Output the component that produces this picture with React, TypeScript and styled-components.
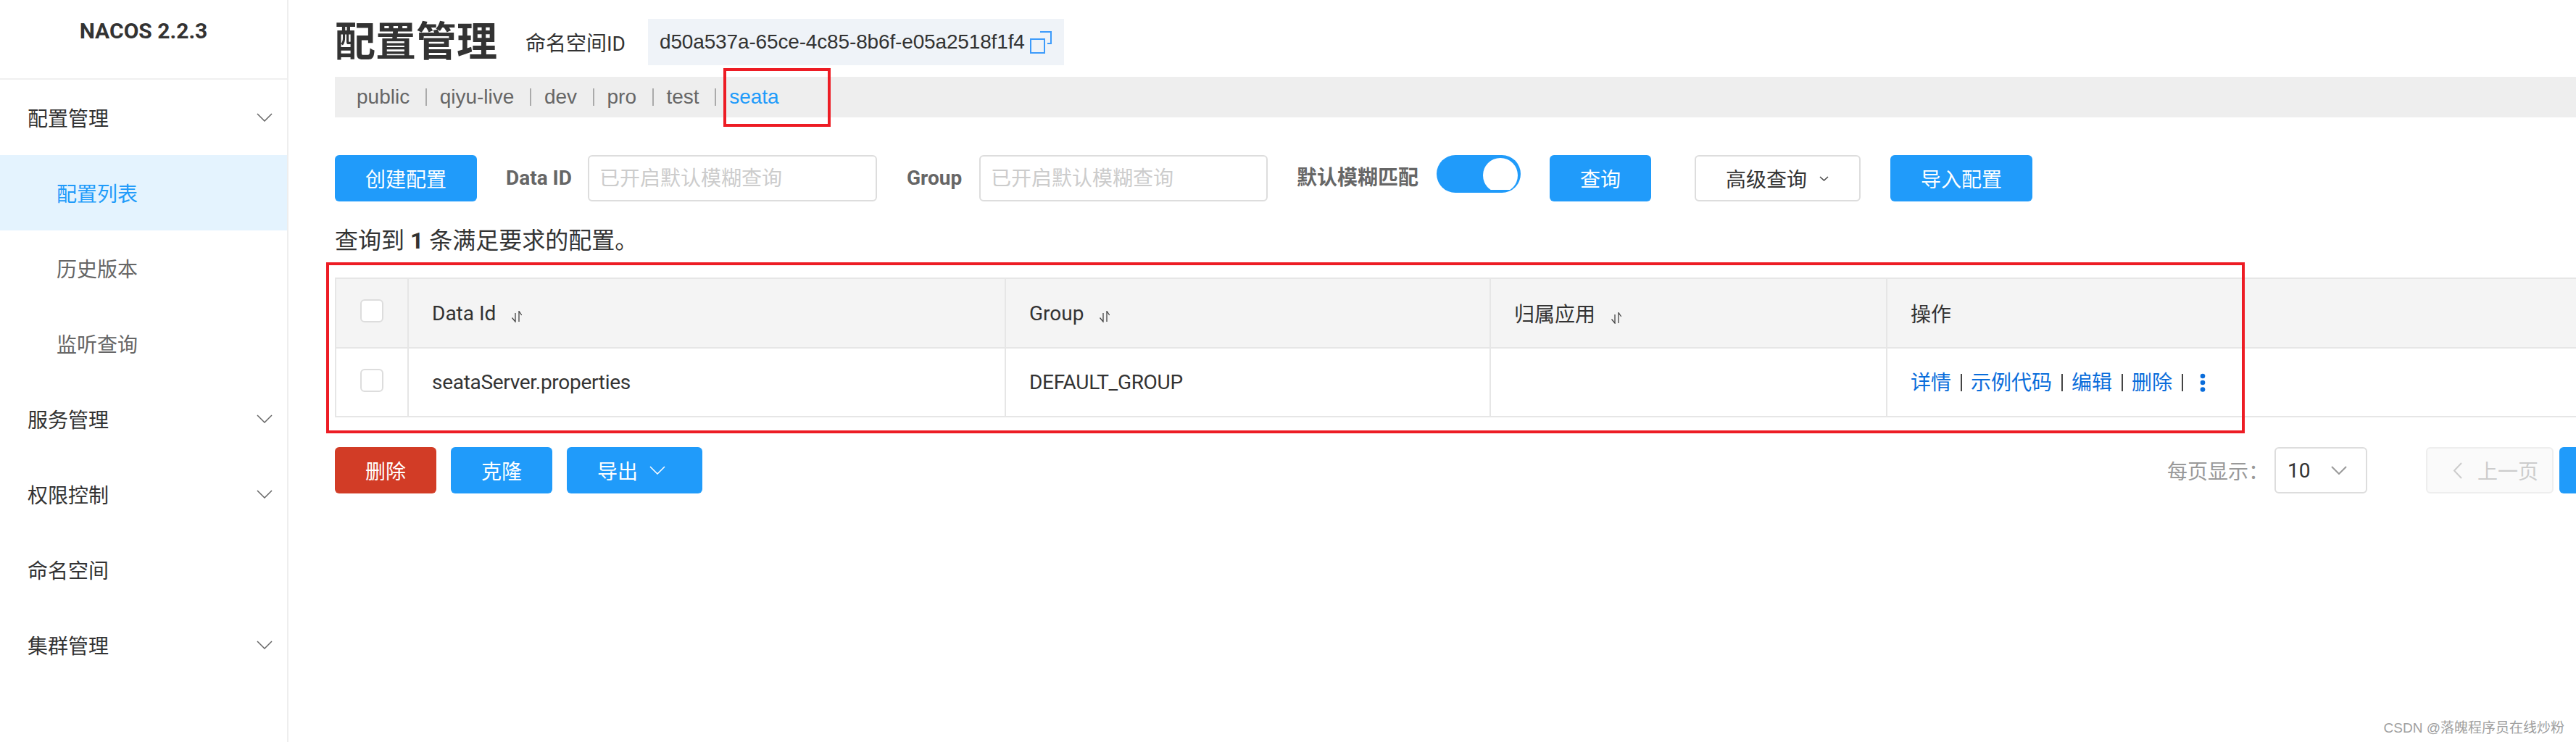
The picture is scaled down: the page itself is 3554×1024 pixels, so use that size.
import React from 'react';
import styled, { createGlobalStyle } from 'styled-components';

const FONT = 'Roboto, "Noto Sans CJK SC", sans-serif';
const ARIAL_FONT = '"Liberation Sans", "Noto Sans CJK SC", sans-serif';
const BLUE = '#209bfa';
const LINE = '#e6e6e6';

const GlobalStyle = createGlobalStyle`
  html, body {
    margin: 0;
    padding: 0;
    background: #fff;
    overflow: hidden;
  }
  body {
    font-family: ${FONT};
    font-size: 28px;
    color: #333;
  }
  * {
    box-sizing: border-box;
  }
`;

const Chevron = ({ size = 22, height = 12, color = '#666', weight = 1.5 }: { size?: number; height?: number; color?: string; weight?: number }) => (
  <svg width={size} height={height} viewBox={`0 0 ${size} ${height}`} fill="none">
    <path d={`M1 1 L${size / 2} ${height - 1} L${size - 1} 1`} stroke={color} strokeWidth={weight} />
  </svg>
);

const SortIcon = () => (
  <SortSvg width="14" height="16" viewBox="0 0 14 16" fill="none">
    <path d="M5 3V15L0.5 9.5M10 15V0.5L13.8 6" stroke="#444" strokeWidth="1.3" />
  </SortSvg>
);

const CopyIcon = () => (
  <CopySvg width="30" height="31" viewBox="0 0 30 31" fill="none">
    <rect x="1" y="11" width="19" height="19" stroke="#3d9bfb" strokeWidth="2" />
    <path d="M14 1H29V17H24" stroke="#3d9bfb" strokeWidth="2" />
  </CopySvg>
);

const MoreIcon = () => (
  <MoreSvg width="8" height="26" viewBox="0 0 8 26" fill="#0a6ddb">
    <circle cx="4" cy="4" r="3.3" />
    <circle cx="4" cy="13" r="3.3" />
    <circle cx="4" cy="22.5" r="3.3" />
  </MoreSvg>
);

const menu = [
  { label: '配置管理', arrow: true },
  { label: '配置列表', sub: true, active: true },
  { label: '历史版本', sub: true },
  { label: '监听查询', sub: true },
  { label: '服务管理', arrow: true },
  { label: '权限控制', arrow: true },
  { label: '命名空间' },
  { label: '集群管理', arrow: true },
];

const tabs = ['public', 'qiyu-live', 'dev', 'pro', 'test'];
const actions = ['详情', '示例代码', '编辑', '删除'];

export default function App() {
  return (
    <Page>
      <GlobalStyle />
      <Sidebar>
        <Logo>NACOS 2.2.3</Logo>
        <Menu>
          {menu.map(item => (
            <MenuItem key={item.label} $sub={item.sub} $active={item.active}>
              {item.label}
              {item.arrow && <Chevron />}
            </MenuItem>
          ))}
        </Menu>
      </Sidebar>

      <Main>
        <Content>
          <TitleRow>
            <Title>配置管理</Title>
            <NamespaceLabel>命名空间ID</NamespaceLabel>
            <NamespaceBox>
              d50a537a-65ce-4c85-8b6f-e05a2518f1f4
              <CopyIcon />
            </NamespaceBox>
          </TitleRow>

          <TabBar>
            {tabs.map(tab => (
              <React.Fragment key={tab}>
                <Tab>{tab}</Tab>
                <TabSep />
              </React.Fragment>
            ))}
            <Tab $active>seata</Tab>
          </TabBar>

          <Toolbar>
            <PrimaryButton>创建配置</PrimaryButton>
            <FieldLabel $width={89} $gap={40} $after={24}>Data ID</FieldLabel>
            <SearchInput placeholder="已开启默认模糊查询" $width={399} />
            <FieldLabel $width={74} $gap={41} $after={26}>Group</FieldLabel>
            <SearchInput placeholder="已开启默认模糊查询" $width={398} />
            <FieldLabel $width={168} $gap={40} $after={25}>默认模糊匹配</FieldLabel>
            <Track>
              <Thumb />
            </Track>
            <PrimaryButton $gap={40}>查询</PrimaryButton>
            <AdvancedButton>
              高级查询
              <Chevron size={13} height={7} color="#444" />
            </AdvancedButton>
            <PrimaryButton $gap={41}>导入配置</PrimaryButton>
          </Toolbar>

          <Summary>查询到 <strong>1</strong> 条满足要求的配置。</Summary>

          <Table>
            <colgroup>
              <col width={100} />
              <col width={824} />
              <col width={669} />
              <col width={547} />
              <col />
            </colgroup>
            <thead>
              <tr>
                <HeadCell $center><Checkbox /></HeadCell>
                <HeadCell>Data Id<SortIcon /></HeadCell>
                <HeadCell>Group<SortIcon /></HeadCell>
                <HeadCell>归属应用<SortIcon /></HeadCell>
                <HeadCell>操作</HeadCell>
              </tr>
            </thead>
            <tbody>
              <tr>
                <BodyCell $center><Checkbox /></BodyCell>
                <BodyCell>seataServer.properties</BodyCell>
                <BodyCell>DEFAULT_GROUP</BodyCell>
                <BodyCell />
                <BodyCell>
                  <Actions>
                    {actions.map(action => (
                      <React.Fragment key={action}>
                        <ActionLink>{action}</ActionLink>
                        <ActionSep />
                      </React.Fragment>
                    ))}
                    <MoreIcon />
                  </Actions>
                </BodyCell>
              </tr>
            </tbody>
          </Table>

          <Footer>
            <BatchActions>
              <DangerButton>删除</DangerButton>
              <PrimaryButton>克隆</PrimaryButton>
              <ExportButton>
                导出
                <Chevron color="#fff" />
              </ExportButton>
            </BatchActions>
            <Pagination>
              <PageSizeLabel>每页显示：</PageSizeLabel>
              <PageSizeSelect>
                10
                <Chevron color="#999" weight={2} />
              </PageSizeSelect>
              <PrevButton>
                <PrevArrow width="13" height="23" viewBox="0 0 13 23" fill="none">
                  <path d="M12 1L2 11.5L12 22" stroke="#ccc" strokeWidth="2" />
                </PrevArrow>
                上一页
              </PrevButton>
              <PageNumber />
            </Pagination>
          </Footer>
        </Content>
      </Main>

      <RedBox $left={998} $top={94} $width={148} $height={81} />
      <RedBox $left={450} $top={362} $width={2647} $height={236} />
      <Watermark>CSDN @落魄程序员在线炒粉</Watermark>
    </Page>
  );
}

const Page = styled.div`
  position: relative;
  display: flex;
  width: 3554px;
  height: 1024px;
  overflow: hidden;
  background: #fff;
`;

const Sidebar = styled.aside`
  flex: 0 0 398px;
  border-right: 2px solid #eee;
`;

const Logo = styled.div`
  height: 110px;
  padding-top: 26px;
  border-bottom: 2px solid #f0f0f0;
  text-align: center;
  font-size: 30px;
  line-height: 34px;
  font-weight: bold;
  color: #333;
`;

const Menu = styled.nav`
  display: flex;
  flex-direction: column;
`;

const MenuItem = styled.div<{ $sub?: boolean; $active?: boolean }>`
  display: flex;
  align-items: center;
  justify-content: space-between;
  height: 104px;
  padding: 0 20px 0 ${props => (props.$sub ? '78px' : '38px')};
  background: ${props => (props.$active ? '#e4f3fe' : 'transparent')};
  color: ${props => (props.$active ? BLUE : props.$sub ? '#666' : '#333')};
  font-size: 28px;
`;

const Main = styled.main`
  flex: 1;
  min-width: 0;
  padding: 26px 0 0 64px;
  overflow: hidden;
`;

const Content = styled.div`
  width: 3133px;
`;

const TitleRow = styled.div`
  display: flex;
  align-items: center;
  height: 64px;
`;

const Title = styled.h1`
  margin: 0 39px 0 0;
  font-size: 56px;
  line-height: 64px;
  font-weight: bold;
  color: #333;
`;

const NamespaceLabel = styled.span`
  width: 169px;
  font-size: 28px;
  color: #333;
`;

const NamespaceBox = styled.div`
  display: flex;
  align-items: center;
  justify-content: space-between;
  width: 574px;
  height: 64px;
  padding: 0 17px 0 16px;
  background: #eff3f8;
  font-family: ${ARIAL_FONT};
  font-size: 28px;
  letter-spacing: -0.15px;
  white-space: nowrap;
  color: #333;
`;

const CopySvg = styled.svg`
  flex: none;
`;

const TabBar = styled.div`
  display: flex;
  align-items: center;
  height: 56px;
  margin-top: 16px;
  padding-left: 30px;
  background: #eee;
`;

const Tab = styled.span<{ $active?: boolean }>`
  font-family: ${ARIAL_FONT};
  font-size: 28px;
  color: ${props => (props.$active ? BLUE : '#666')};
`;

const TabSep = styled.i`
  width: 2px;
  height: 24px;
  margin: 0 18px 0 21.5px;
  background: #aaa;
`;

const Toolbar = styled.div`
  display: flex;
  align-items: flex-start;
  height: 64px;
  margin-top: 52px;
`;

const PrimaryButton = styled.button<{ $gap?: number }>`
  height: 64px;
  margin-left: ${props => props.$gap || 0}px;
  padding: 0 42px;
  border: 0;
  border-radius: 6px;
  background: ${BLUE};
  color: #fff;
  font-family: ${FONT};
  font-size: 28px;
  white-space: nowrap;
`;

const DangerButton = styled(PrimaryButton)`
  background: #d23c26;
`;

const ExportButton = styled(PrimaryButton)`
  display: flex;
  align-items: center;
  gap: 16px;
  padding: 0 51px 0 42px;
`;

const AdvancedButton = styled.button`
  display: flex;
  align-items: center;
  gap: 17px;
  width: 229px;
  height: 64px;
  margin-left: 60px;
  padding: 0 0 0 41px;
  border: 2px solid #ddd;
  border-radius: 6px;
  background: #fff;
  color: #333;
  font-family: ${FONT};
  font-size: 28px;
`;

const FieldLabel = styled.label<{ $width: number; $gap: number; $after: number }>`
  flex: 0 0 ${props => props.$width}px;
  min-width: 0;
  margin: 0 ${props => props.$after}px 0 ${props => props.$gap}px;
  line-height: 64px;
  font-size: 28px;
  font-weight: bold;
  color: #666;
  white-space: nowrap;
`;

const SearchInput = styled.input<{ $width: number }>`
  width: ${props => props.$width}px;
  height: 64px;
  padding: 0 14px;
  border: 2px solid #ddd;
  border-radius: 6px;
  outline: none;
  font-family: ${FONT};
  font-size: 28px;
  &::placeholder {
    color: #ccc;
  }
`;

const Track = styled.div`
  display: flex;
  justify-content: flex-end;
  flex: 0 0 116px;
  height: 52px;
  padding: 4px 4px 0 0;
  border-radius: 26px;
  background: ${BLUE};
`;

const Thumb = styled.i`
  width: 48px;
  height: 48px;
  border-radius: 50%;
  background: #fff;
  clip-path: inset(0 0 4px 0);
`;

const Summary = styled.div`
  margin-top: 36px;
  font-size: 32px;
  line-height: 36px;
  color: #333;
`;

const Table = styled.table`
  width: 100%;
  margin-top: 33px;
  border-collapse: collapse;
  table-layout: fixed;
`;

const HeadCell = styled.th<{ $center?: boolean }>`
  height: 96px;
  padding: 0 ${props => (props.$center ? '0' : '32px')};
  border: 2px solid ${LINE};
  background: #f4f4f4;
  text-align: ${props => (props.$center ? 'center' : 'left')};
  font-size: 28px;
  font-weight: normal;
  color: #333;
`;

const BodyCell = styled.td<{ $center?: boolean }>`
  height: 95px;
  padding: 0 ${props => (props.$center ? '0' : '32px')};
  border: 2px solid ${LINE};
  text-align: ${props => (props.$center ? 'center' : 'left')};
  font-size: 28px;
  letter-spacing: -0.3px;
  color: #333;
`;

const Checkbox = styled.span`
  display: inline-block;
  width: 32px;
  height: 32px;
  margin-bottom: 6px;
  border: 2px solid #ddd;
  border-radius: 6px;
  background: #fff;
  vertical-align: middle;
`;

const SortSvg = styled.svg`
  margin-left: 22px;
  vertical-align: -3px;
`;

const Actions = styled.div`
  display: flex;
  align-items: center;
`;

const ActionLink = styled.a`
  padding-bottom: 4px;
  color: #0a6ddb;
  font-size: 28px;
  letter-spacing: 0;
`;

const ActionSep = styled.i`
  width: 2px;
  height: 24px;
  margin: 0 12px 0 13px;
  background: #444;
`;

const MoreSvg = styled.svg`
  margin-left: 11px;
`;

const Footer = styled.div`
  display: flex;
  justify-content: space-between;
  margin-top: 41px;
`;

const BatchActions = styled.div`
  display: flex;
  gap: 20px;
`;

const Pagination = styled.div`
  display: flex;
  align-items: center;
`;

const PageSizeLabel = styled.span`
  width: 148px;
  font-size: 28px;
  color: #999;
`;

const PageSizeSelect = styled.div`
  display: flex;
  align-items: center;
  justify-content: space-between;
  width: 128px;
  height: 64px;
  margin-right: 81px;
  padding: 0 26px 0 16px;
  border: 2px solid #ddd;
  border-radius: 6px;
  font-size: 28px;
  color: #333;
`;

const PrevButton = styled.div`
  display: flex;
  align-items: center;
  gap: 21px;
  width: 176px;
  height: 64px;
  padding-left: 35px;
  border: 2px solid #eee;
  border-radius: 6px;
  background: #fafafa;
  color: #ccc;
  font-size: 28px;
`;

const PrevArrow = styled.svg`
  flex: none;
`;

const PageNumber = styled.div`
  width: 64px;
  height: 64px;
  margin-left: 8px;
  border-radius: 6px;
  background: ${BLUE};
`;

// hand-drawn annotation boxes on top of the screenshot
const RedBox = styled.div<{ $left: number; $top: number; $width: number; $height: number }>`
  position: absolute;
  left: ${props => props.$left}px;
  top: ${props => props.$top}px;
  width: ${props => props.$width}px;
  height: ${props => props.$height}px;
  border: 4px solid #ed1c24;
`;

const Watermark = styled.div`
  position: absolute;
  right: 16px;
  bottom: 8px;
  font-family: ${ARIAL_FONT};
  font-size: 19px;
  color: #a0a0a0;
`;
